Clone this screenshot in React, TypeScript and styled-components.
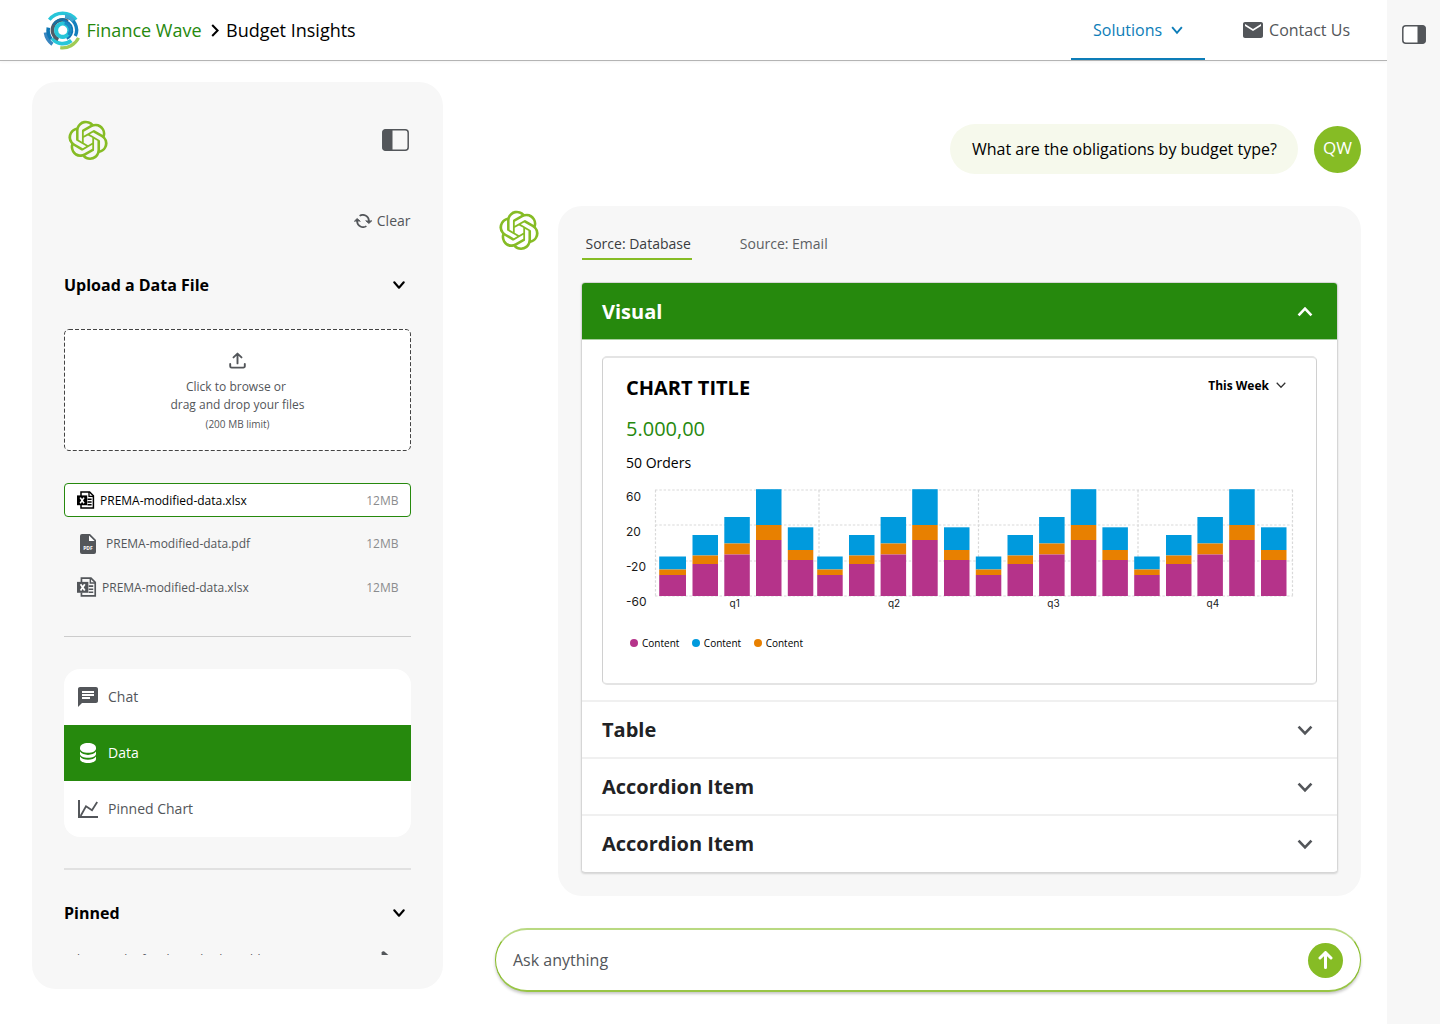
import React from "react";
import styled, { createGlobalStyle } from "styled-components";
import { MdChat, MdMail } from "react-icons/md";

const green = "#26890d";
const lime = "#86bc25";
const blue = "#0d7db8";
const grey = "#53565a";
const surface = "#f7f7f7";

const GlobalStyle = createGlobalStyle`
  *, *::before, *::after { box-sizing: border-box; }
  body {
    margin: 0;
    background: #fff;
    color: #000;
    font-family: "Open Sans", "Noto Sans", sans-serif;
    font-size: 14px;
  }
  svg { display: block; flex: none; }
`;

/* ---------- Icons ---------- */

type ChevronProps = { width: number; height: number; stroke: number; color: string; up?: boolean; round?: boolean };

const Chevron = ({ width, height, stroke, color, up, round }: ChevronProps) => {
  const p = stroke * 0.6;
  const a = up ? height - p : p;
  const b = up ? p : height - p;
  return (
    <svg width={width} height={height} viewBox={`0 0 ${width} ${height}`} fill="none" overflow="visible">
      <polyline
        points={`${p},${a} ${width / 2},${b} ${width - p},${a}`}
        stroke={color}
        strokeWidth={stroke}
        strokeLinecap={round ? "round" : "butt"}
        strokeLinejoin={round ? "round" : "miter"}
      />
    </svg>
  );
};

const AssistantMark = () => (
  <svg width="40" height="40" viewBox="-0.2 -0.4 24.4 24.4" fill={lime}>
    <path d="M22.2819 9.8211a5.9847 5.9847 0 0 0-.5157-4.9108 6.0462 6.0462 0 0 0-6.5098-2.9A6.0651 6.0651 0 0 0 4.9807 4.1818a5.9847 5.9847 0 0 0-3.9977 2.9 6.0462 6.0462 0 0 0 .7427 7.0966 5.98 5.98 0 0 0 .511 4.9107 6.051 6.051 0 0 0 6.5146 2.9001A5.9847 5.9847 0 0 0 13.2599 24a6.0557 6.0557 0 0 0 5.7718-4.2058 5.9894 5.9894 0 0 0 3.9977-2.9001 6.0557 6.0557 0 0 0-.7475-7.0729zm-9.022 12.6081a4.4755 4.4755 0 0 1-2.8764-1.0408l.1419-.0804 4.7783-2.7582a.7948.7948 0 0 0 .3927-.6813v-6.7369l2.02 1.1686a.071.071 0 0 1 .038.052v5.5826a4.504 4.504 0 0 1-4.4945 4.4944zm-9.6607-4.1254a4.4708 4.4708 0 0 1-.5346-3.0137l.142.0852 4.783 2.7582a.7712.7712 0 0 0 .7806 0l5.8428-3.3685v2.3324a.0804.0804 0 0 1-.0332.0615L9.74 19.9502a4.4992 4.4992 0 0 1-6.1408-1.6464zM2.3408 7.8956a4.485 4.485 0 0 1 2.3655-1.9728V11.6a.7664.7664 0 0 0 .3879.6765l5.8144 3.3543-2.0201 1.1685a.0757.0757 0 0 1-.071 0l-4.8303-2.7865A4.504 4.504 0 0 1 2.3408 7.872zm16.5963 3.8558L13.1038 8.364 15.1192 7.2a.0757.0757 0 0 1 .071 0l4.8303 2.7913a4.4944 4.4944 0 0 1-.6765 8.1042v-5.6772a.79.79 0 0 0-.407-.667zm2.0107-3.0231l-.142-.0852-4.7735-2.7818a.7759.7759 0 0 0-.7854 0L9.409 9.2297V6.8974a.0662.0662 0 0 1 .0284-.0615l4.8303-2.7866a4.4992 4.4992 0 0 1 6.6802 4.66zM8.3065 12.863l-2.02-1.1638a.0804.0804 0 0 1-.038-.0567V6.0742a4.4992 4.4992 0 0 1 7.3757-3.4537l-.142.0805L8.704 5.459a.7948.7948 0 0 0-.3927.6813zm1.0976-2.3654l2.602-1.4998 2.6069 1.4998v2.9994l-2.5974 1.4997-2.6067-1.4997Z" />
  </svg>
);

/* Arc of a circle round (19.7, 19.2), angles in degrees clockwise from the right. */
const arc = (r: number, from: number, to: number) => {
  const pt = (deg: number) => {
    const t = (deg * Math.PI) / 180;
    return `${(19.7 + r * Math.cos(t)).toFixed(2)} ${(19.2 + r * Math.sin(t)).toFixed(2)}`;
  };
  return `M${pt(from)}A${r} ${r} 0 ${to - from > 180 ? 1 : 0} 1 ${pt(to)}`;
};

const logoArcs = [
  { r: 17, from: 218, to: 322, w: 3.4, c: "#27c6d9" },
  { r: 13.9, from: 280, to: 385, w: 3.4, c: "#1580bd" },
  { r: 14.6, from: 280, to: 318, w: 3.6, c: "#3fa9d2" },
  { r: 17.6, from: 26, to: 98, w: 3.2, c: "#a0cb55" },
  { r: 17.4, from: 126, to: 172, w: 3.6, c: "#3a86c0" },
  { r: 14.6, from: 142, to: 190, w: 3.6, c: "#0f77b5" },
  { r: 13.4, from: 50, to: 142, w: 3.8, c: "#27c6d9" },
  { r: 10.2, from: 115, to: 300, w: 3.6, c: "#505a66" },
  { r: 10.8, from: 210, to: 285, w: 2.6, c: "#1b6f9f" },
  { r: 8.6, from: 270, to: 425, w: 4, c: "#1278b6" },
  { r: 6.6, from: 0, to: 359.9, w: 4, c: "#27c6d9" },
  { r: 7.4, from: 285, to: 400, w: 2.6, c: "#1a8ac4" },
];

const BrandLogo = () => (
  <svg width="39" height="39" viewBox="0 0 39 39" fill="none">
    {logoArcs.map((a, i) => (
      <path key={i} d={arc(a.r, a.from, a.to)} stroke={a.c} strokeWidth={a.w} />
    ))}
  </svg>
);

const PanelIcon = ({ side, width, height }: { side: "left" | "right"; width: number; height: number }) => (
  <svg width={width} height={height} viewBox={`0 0 ${width} ${height}`}>
    <rect x="0.8" y="0.8" width={width - 1.6} height={height - 1.6} rx="3" fill={side === "left" ? surface : "#fff"} stroke={grey} strokeWidth="1.5" />
    {side === "left" ? (
      <path d={`M3.5 0.5H10.5V${height - 0.5}H3.5A3 3 0 0 1 0.5 ${height - 3.5}V3.5A3 3 0 0 1 3.5 0.5Z`} fill={grey} />
    ) : (
      <path d={`M${width - 3.5} 0.5H${width - 8.5}V${height - 0.5}H${width - 3.5}A3 3 0 0 0 ${width - 0.5} ${height - 3.5}V3.5A3 3 0 0 0 ${width - 3.5} 0.5Z`} fill={grey} />
    )}
  </svg>
);

const RefreshIcon = () => (
  <svg width="18" height="14" viewBox="0 0 18 14" fill="none" stroke={grey} strokeWidth="1.7">
    <path d="M5.6 1.9A6 6 0 0 1 14.9 6.4V7.4" />
    <path d="M12.4 12.1A6 6 0 0 1 3.1 7.6V6.6" />
    <path d="M11.6 6.6L14.9 9.4L18 6.6" fill={grey} stroke={grey} strokeWidth="1" />
    <path d="M0.2 7.4L3.1 4.6L6.4 7.4" fill={grey} stroke={grey} strokeWidth="1" />
  </svg>
);

const UploadIcon = () => (
  <svg width="18" height="18" viewBox="0 0 18 18" fill="none" stroke={grey} strokeWidth="1.9" strokeLinecap="round" strokeLinejoin="round">
    <path d="M8.5 11.4V2M4.5 5.4L8.5 1.6L12.5 5.4" />
    <path d="M1.2 12V14.2A1.4 1.4 0 0 0 2.6 15.6H14.4A1.4 1.4 0 0 0 15.8 14.2V12" />
  </svg>
);

const ExcelIcon = ({ color, size, bg }: { color: string; size: number; bg: string }) => (
  <svg width={size} height={size} viewBox="0 0 18 18" fill="none">
    <path d="M4 5V1H12.6L16.4 4.8V17H4V14" stroke={color} strokeWidth="1.5" />
    <path d="M12 1V5.4H16.4" stroke={color} strokeWidth="1.3" />
    <path d="M10.5 8.2H14.6M10.5 11H14.6M10.5 13.8H14.6" stroke={color} strokeWidth="1.4" />
    <rect x="0" y="4.4" width="10.2" height="9.8" fill={color} />
    <path d="M3.2 6.6L7 12.2M7 6.6L3.2 12.2" stroke={bg} strokeWidth="1.6" />
  </svg>
);

const PdfIcon = () => (
  <svg width="16" height="20" viewBox="0 0 16 20">
    <path d="M2 0H10L16 6V18A2 2 0 0 1 14 20H2A2 2 0 0 1 0 18V2A2 2 0 0 1 2 0Z" fill={grey} />
    <path d="M9 1.4V7H14.6Z" fill="#fff" />
    <text x="8" y="15.8" textAnchor="middle" fontFamily="Open Sans, sans-serif" fontSize="5" fontWeight="700" fill="#fff">
      PDF
    </text>
  </svg>
);

const DatabaseIcon = () => (
  <svg width="16" height="20" viewBox="0 0 16 20" fill="#fff">
    <path d="M0 4.6C0 2 3.6 0 8 0S16 2 16 4.6V5.4C16 8 12.4 9.8 8 9.8S0 8 0 5.4Z" />
    <path d="M0 8.6C1.6 10.8 4.6 11.9 8 11.9S14.4 10.8 16 8.6V11C16 13.2 12.4 14.8 8 14.8S0 13.2 0 11Z" />
    <path d="M0 13.6C1.6 15.8 4.6 16.7 8 16.7S14.4 15.8 16 13.6V16C16 18.4 12.4 20 8 20S0 18.4 0 16Z" />
  </svg>
);

const LineChartIcon = () => (
  <svg width="20" height="18" viewBox="0 0 20 18" fill="none" stroke={grey}>
    <path d="M1 0V17H20" strokeWidth="2" />
    <path d="M2.6 16L8 6.2L14 10.2L19.2 2" strokeWidth="1.8" />
  </svg>
);

const ArrowUpIcon = () => (
  <svg width="15" height="18" viewBox="0 0 15 18" fill="none" stroke="#fff" strokeWidth="3" strokeLinecap="round">
    <path d="M7.5 16.4V2M2 7L7.5 1.6L13 7" />
  </svg>
);

const PencilIcon = () => (
  <svg width="18" height="18" viewBox="0 0 18 18" fill={grey}>
    <path d="M6.6 4V1.6Q7.2 0 9 0.2L13.6 4.2L8 11Z" />
  </svg>
);

/* ---------- Shell ---------- */

const Page = styled.div`
  display: grid;
  grid-template-columns: 1387px 53px;
  width: 1440px;
  height: 1024px;
  overflow: hidden;
`;

const Rail = styled.aside`
  background: ${surface};
  padding: 25px 0 0 15px;
`;

const Content = styled.div`
  display: flex;
  flex-direction: column;
`;

const Header = styled.header`
  display: flex;
  justify-content: space-between;
  height: 61px;
  border-bottom: 1px solid #b4b4b4;
  box-shadow: 0 1px 3px rgba(0, 0, 0, 0.05);
`;

const Breadcrumb = styled.div`
  display: flex;
  align-items: center;
  padding-left: 43px;
  font-size: 18px;
`;

const BrandName = styled.span`
  margin: 0 9.5px 0 4.5px;
  color: ${green};
`;

const PageName = styled.span`
  margin-left: 7px;
`;

const TopNav = styled.nav`
  display: flex;
  gap: 36px;
  padding-right: 37px;
`;

const TopLink = styled.a<{ $active?: boolean }>`
  display: flex;
  align-items: center;
  gap: ${(p) => (p.$active ? 9 : 4)}px;
  height: 60px;
  padding: ${(p) => (p.$active ? "2px 22px 0" : "0")};
  border-bottom: ${(p) => (p.$active ? `2px solid ${blue}` : "none")};
  color: ${(p) => (p.$active ? blue : grey)};
  font-size: 16px;
`;

const Columns = styled.div`
  display: flex;
  gap: 52px;
  padding: 21px 26px 0 32px;
`;

/* ---------- Sidebar ---------- */

const Sidebar = styled.aside`
  display: flex;
  flex-direction: column;
  width: 411px;
  height: 907px;
  padding: 38px 32px 0;
  border-radius: 24px;
  background: ${surface};
`;

const SidebarTop = styled.div`
  display: flex;
  align-items: center;
  justify-content: space-between;
  height: 40px;
  padding: 0 2px 0 3.5px;
`;

const ClearButton = styled.button`
  display: flex;
  align-items: center;
  align-self: flex-end;
  gap: 5px;
  height: 24px;
  margin: 49px 0 0;
  padding: 0 0.5px 1px 0;
  border: 0;
  background: none;
  color: ${grey};
  font: inherit;
`;

const SectionHeader = styled.div<{ $top: number }>`
  display: flex;
  align-items: center;
  justify-content: space-between;
  height: 24px;
  margin-top: ${(p) => p.$top}px;
  padding-right: 6px;
  font-size: 16px;
  font-weight: 700;
`;

const DropZone = styled.div`
  position: relative;
  display: flex;
  flex-direction: column;
  align-items: center;
  height: 122px;
  margin-top: 32px;
  padding-top: 23px;
  border-radius: 5px;
  background: #fff;
  color: ${grey};
  font-size: 12px;
  line-height: 18px;
  text-align: center;
`;

const DashedOutline = styled.svg`
  position: absolute;
  inset: 0;
`;

const DropText = styled.div`
  margin-top: 8px;
`;

const DropLimit = styled.div`
  margin-top: 2px;
  font-size: 10px;
  line-height: 16px;
`;

const FileList = styled.div`
  display: flex;
  flex-direction: column;
  gap: 9.5px;
  margin: 32px 0 1px;
`;

const FileRow = styled.div<{ $selected?: boolean; $gap: number; $indent: number }>`
  display: flex;
  align-items: center;
  height: 34px;
  padding: 0 11.5px 0 ${(p) => p.$indent}px;
  border: 1px solid ${(p) => (p.$selected ? green : "transparent")};
  border-radius: 4px;
  background: ${(p) => (p.$selected ? "#fff" : "transparent")};
  color: ${(p) => (p.$selected ? "#000" : grey)};
  font-size: 12px;
  gap: ${(p) => p.$gap}px;
`;

const FileSize = styled.span`
  margin-left: auto;
  color: #8b8c8e;
`;

const Divider = styled.hr<{ $size: number; $color: string }>`
  width: 100%;
  height: ${(p) => p.$size}px;
  margin: 31px 0 0;
  border: 0;
  background: ${(p) => p.$color};
  flex: none;
`;

const SideNav = styled.nav`
  margin-top: 32px;
  border-radius: 16px;
  background: #fff;
  overflow: hidden;
`;

const SideLink = styled.a<{ $active?: boolean }>`
  display: flex;
  align-items: center;
  height: 56px;
  padding: 0 0 1px 12px;
  background: ${(p) => (p.$active ? green : "transparent")};
  color: ${(p) => (p.$active ? "#fff" : grey)};
`;

const SideIcon = styled.span`
  display: flex;
  justify-content: center;
  width: 24px;
  margin: 1px 8px 0 0;
`;

const PinnedList = styled.div`
  display: flex;
  justify-content: space-between;
  height: 30px;
  padding: 26px 18px 0 2px;
  color: ${grey};
  font-size: 12px;
  line-height: 18px;
  overflow: hidden;
`;

/* ---------- Conversation ---------- */

const Conversation = styled.main`
  display: flex;
  flex-direction: column;
  width: 866px;
  padding-top: 42px;
`;

const QuestionRow = styled.div`
  display: flex;
  align-items: flex-start;
  justify-content: flex-end;
  gap: 16px;
`;

const Bubble = styled.div`
  display: flex;
  align-items: center;
  width: 348px;
  height: 50px;
  padding-left: 22px;
  border-radius: 25px;
  background: #f6f9ec;
  font-size: 16px;
  white-space: nowrap;
`;

const Avatar = styled.div`
  display: flex;
  align-items: center;
  justify-content: center;
  width: 47px;
  height: 47px;
  margin-top: 1.5px;
  border-radius: 50%;
  background: ${lime};
  color: #fff;
  font-size: 17px;
  line-height: 20px;
  padding-bottom: 2px;
`;

const AnswerRow = styled.div`
  display: flex;
  justify-content: space-between;
  margin-top: 32px;
  padding-left: 3.5px;
`;

const AnswerMark = styled.div`
  padding-top: 4px;
`;

const AnswerCard = styled.section`
  width: 803px;
  height: 690px;
  padding: 26px 23px 0;
  border-radius: 24px;
  background: ${surface};
`;

const Tabs = styled.div`
  display: flex;
  gap: 44.5px;
  padding-left: 1px;
`;

const Tab = styled.button<{ $active?: boolean }>`
  height: 28px;
  padding: 0 1px 4px 3.5px;
  border: 0;
  border-bottom: 2px solid ${(p) => (p.$active ? lime : "transparent")};
  background: none;
  color: ${(p) => (p.$active ? "#3a3c3f" : "#5c5f63")};
  font: inherit;
  white-space: nowrap;
`;

const Accordion = styled.div`
  height: 591px;
  margin-top: 22px;
  border: 1px solid #d6d6d6;
  border-radius: 4px;
  background: #fff;
  box-shadow: 0 1px 2px rgba(0, 0, 0, 0.14);
  overflow: hidden;
`;

const AccordionHeader = styled.div<{ $open?: boolean }>`
  display: flex;
  align-items: center;
  justify-content: space-between;
  height: 57px;
  padding: ${(p) => (p.$open ? "1px" : "0")} 24px 0 20px;
  border-top: ${(p) => (p.$open ? "none" : "2px solid #f0f0f0")};
  border-bottom: ${(p) => (p.$open ? "1px solid #a9cfa0" : "none")};
  background: ${(p) => (p.$open ? green : "#fff")};
  color: ${(p) => (p.$open ? "#fff" : "#212225")};
  font-size: 20px;
  font-weight: 700;
`;

const AccordionBody = styled.div`
  height: 360px;
  padding: 16px 20px 0;
`;

const ChartPanel = styled.div`
  height: 329px;
  padding: 13px 23px 0;
  border: 1px solid #d0d0d0;
  border-top: 2px solid #e4e4e4;
  border-bottom: 2px solid #e4e4e4;
  border-radius: 5px;
`;

const ChartHead = styled.div`
  display: flex;
  justify-content: space-between;
  height: 34px;
`;

const ChartTitle = styled.h2`
  margin: 0;
  font-size: 20px;
  font-weight: 700;
  line-height: 34px;
`;

const PeriodSelect = styled.div`
  display: flex;
  align-items: center;
  gap: 7px;
  height: 28px;
  padding-right: 7px;
  font-size: 12px;
  font-weight: 700;
`;

const ChartValue = styled.div`
  margin-top: 10px;
  color: ${green};
  font-size: 20px;
  line-height: 28px;
`;

const ChartNote = styled.div`
  margin-top: 10px;
  line-height: 20px;
`;

const ChartBox = styled.div`
  margin-top: 16px;
`;

const Legend = styled.div`
  display: flex;
  gap: 12.5px;
  margin-top: 22px;
  padding-left: 4px;
  font-size: 10px;
  line-height: 16px;
`;

const LegendItem = styled.div`
  display: flex;
  align-items: center;
  gap: 4px;
`;

const Dot = styled.span<{ $color: string }>`
  width: 8px;
  height: 8px;
  border-radius: 50%;
  background: ${(p) => p.$color};
`;

const Composer = styled.div`
  display: flex;
  align-items: center;
  justify-content: space-between;
  height: 64px;
  margin-top: 32px;
  padding: 0 17px;
  border: 1px solid ${lime};
  border-top: 2px solid #b9d982;
  border-bottom: 2px solid #98c545;
  border-radius: 32px;
  background: #fff;
  box-shadow: 0 2px 3px rgba(0, 0, 0, 0.22);
  color: ${grey};
  font-size: 16px;
`;

const SendButton = styled.button`
  display: flex;
  align-items: center;
  justify-content: center;
  width: 35px;
  height: 35px;
  padding: 0;
  border: 0;
  border-radius: 50%;
  background: ${lime};
`;

/* ---------- Chart ---------- */

const series = [
  { name: "Content", color: "#b5338a" },
  { name: "Content", color: "#009add" },
  { name: "Content", color: "#e88000" },
];

/* Tops of the blue, orange and magenta parts of each of the five bars in a quarter. */
const barTops = [
  [67.5, 80.5, 86],
  [46, 66.5, 75],
  [28, 54.5, 65.5],
  [0.2, 36, 51],
  [38.3, 61, 71],
];

/* Left edges of the bars, one row for each quarter. */
const barLefts = [
  [33.2, 66.5, 98.3, 130, 161.8],
  [191.2, 223, 254.6, 286.2, 318],
  [349.8, 381.5, 413.1, 444.8, 476.4],
  [508.2, 540, 571.4, 603.2, 635],
];

const StackedChart = () => (
  <svg width="668" height="124" viewBox="0 0 668 124">
    <g stroke="#d9d9d9" strokeDasharray="2.5 1.8" strokeWidth="1.2">
      {[1, 36, 72, 107].map((y) => (
        <line key={y} x1="29" x2="667" y1={y} y2={y} />
      ))}
      {[29.5, 193, 352.5, 512, 666.5].map((x) => (
        <line key={x} x1={x} x2={x} y1="1" y2="107" />
      ))}
    </g>
    {barLefts.map((quarter, q) =>
      quarter.map((x, i) => {
        const [a, b, c] = barTops[i];
        const w = q === 0 && i === 0 ? 26.8 : 25.5;
        return (
          <g key={x}>
            <rect x={x} y={a} width={w} height={b - a} fill={series[1].color} />
            <rect x={x} y={b} width={w} height={c - b} fill={series[2].color} />
            <rect x={x} y={c} width={w} height={107 - c} fill={series[0].color} />
          </g>
        );
      })
    )}
    <g fontFamily="Inter, sans-serif" fontSize="12" fill="#1a1a1a">
      {["60", "20", "-20", "-60"].map((label, i) => (
        <text key={label} x="0" y={12.4 + i * 34.7}>
          {label}
        </text>
      ))}
    </g>
    <g fontFamily="Inter, sans-serif" fontSize="10" fill="#1a1a1a" textAnchor="middle">
      {["q1", "q2", "q3", "q4"].map((label, i) => (
        <text key={label} x={108.7 + i * 159.4} y="117.5">
          {label}
        </text>
      ))}
    </g>
  </svg>
);

/* ---------- App ---------- */

export default function App() {
  return (
    <>
      <GlobalStyle />
      <Page>
        <Content>
          <Header>
            <Breadcrumb>
              <BrandLogo />
              <BrandName>Finance Wave</BrandName>
              <svg width="8" height="13" viewBox="0 0 8 13" fill="none">
                <path d="M1.2 1L6.6 6.5L1.2 12" stroke="#000" strokeWidth="2" />
              </svg>
              <PageName>Budget Insights</PageName>
            </Breadcrumb>
            <TopNav>
              <TopLink $active>
                Solutions
                <Chevron width={12} height={8} stroke={1.9} color={blue} />
              </TopLink>
              <TopLink>
                <MdMail size={24} />
                Contact Us
              </TopLink>
            </TopNav>
          </Header>
          <Columns>
            <Sidebar>
              <SidebarTop>
                <AssistantMark />
                <PanelIcon side="left" width={27} height={22} />
              </SidebarTop>
              <ClearButton>
                <RefreshIcon />
                Clear
              </ClearButton>
              <SectionHeader $top={40}>
                Upload a Data File
                <Chevron width={12} height={8} stroke={2.1} color="#000" round />
              </SectionHeader>
              <DropZone>
                <DashedOutline width="347" height="122" viewBox="0 0 347 122" fill="none">
                  <rect x="0.5" y="0.5" width="346" height="121" rx="4.5" stroke="#444" strokeDasharray="4 2" />
                </DashedOutline>
                <UploadIcon />
                <DropText>
                  Click to browse or&nbsp;
                  <br />
                  drag and drop your files
                </DropText>
                <DropLimit>(200 MB limit)</DropLimit>
              </DropZone>
              <FileList>
                <FileRow $selected $gap={5} $indent={12}>
                  <ExcelIcon color="#000" bg="#fff" size={18} />
                  PREMA-modified-data.xlsx
                  <FileSize>12MB</FileSize>
                </FileRow>
                <FileRow $gap={10} $indent={15}>
                  <PdfIcon />
                  PREMA-modified-data.pdf
                  <FileSize>12MB</FileSize>
                </FileRow>
                <FileRow $gap={5} $indent={12}>
                  <ExcelIcon color={grey} bg="#fff" size={20} />
                  PREMA-modified-data.xlsx
                  <FileSize>12MB</FileSize>
                </FileRow>
              </FileList>
              <Divider $size={1} $color="#cccccc" />
              <SideNav>
                <SideLink>
                  <SideIcon>
                    <MdChat size={24} />
                  </SideIcon>
                  Chat
                </SideLink>
                <SideLink $active>
                  <SideIcon>
                    <DatabaseIcon />
                  </SideIcon>
                  Data
                </SideLink>
                <SideLink>
                  <SideIcon>
                    <LineChartIcon />
                  </SideIcon>
                  Pinned Chart
                </SideLink>
              </SideNav>
              <Divider $size={2} $color="#e1e1e1" />
              <SectionHeader $top={31}>
                Pinned
                <Chevron width={12} height={8} stroke={2.1} color="#000" round />
              </SectionHeader>
              <PinnedList>
                <span>What are the fiscal year budget obligations</span>
                <PencilIcon />
              </PinnedList>
            </Sidebar>
            <Conversation>
              <QuestionRow>
                <Bubble>What are the obligations by budget type?</Bubble>
                <Avatar>QW</Avatar>
              </QuestionRow>
              <AnswerRow>
                <AnswerMark>
                  <AssistantMark />
                </AnswerMark>
                <AnswerCard>
                  <Tabs>
                    <Tab $active>Sorce: Database</Tab>
                    <Tab>Source: Email</Tab>
                  </Tabs>
                  <Accordion>
                    <AccordionHeader $open>
                      Visual
                      <Chevron width={16} height={10} stroke={2.6} color="#fff" up />
                    </AccordionHeader>
                    <AccordionBody>
                      <ChartPanel>
                        <ChartHead>
                          <ChartTitle>CHART TITLE</ChartTitle>
                          <PeriodSelect>
                            This Week
                            <Chevron width={10} height={6} stroke={1.2} color="#333" />
                          </PeriodSelect>
                        </ChartHead>
                        <ChartValue>5.000,00</ChartValue>
                        <ChartNote>50 Orders</ChartNote>
                        <ChartBox>
                          <StackedChart />
                        </ChartBox>
                        <Legend>
                          {series.map((s) => (
                            <LegendItem key={s.color}>
                              <Dot $color={s.color} />
                              {s.name}
                            </LegendItem>
                          ))}
                        </Legend>
                      </ChartPanel>
                    </AccordionBody>
                    {["Table", "Accordion Item", "Accordion Item"].map((label, i) => (
                      <AccordionHeader key={i}>
                        {label}
                        <Chevron width={16} height={10} stroke={2.6} color={grey} />
                      </AccordionHeader>
                    ))}
                  </Accordion>
                </AnswerCard>
              </AnswerRow>
              <Composer>
                Ask anything
                <SendButton>
                  <ArrowUpIcon />
                </SendButton>
              </Composer>
            </Conversation>
          </Columns>
        </Content>
        <Rail>
          <PanelIcon side="right" width={24} height={19} />
        </Rail>
      </Page>
    </>
  );
}
